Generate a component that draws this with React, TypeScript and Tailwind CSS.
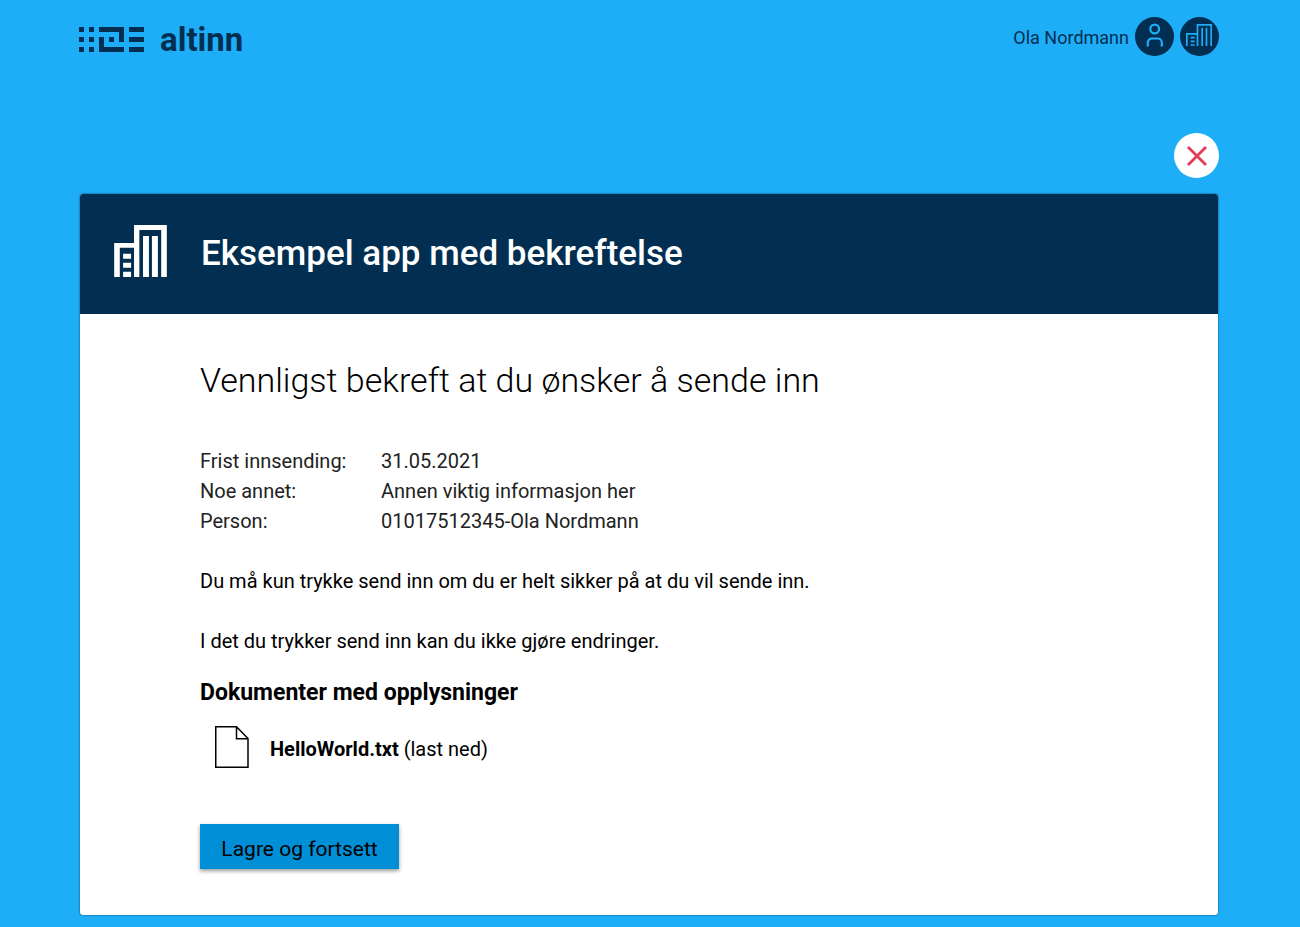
import React from "react";

type Detail = { label: string; value: string };

const details: Detail[] = [
  { label: "Frist innsending:", value: "31.05.2021" },
  { label: "Noe annet:", value: "Annen viktig informasjon her" },
  { label: "Person:", value: "01017512345-Ola Nordmann" },
];

function LogoMark() {
  return (
    <svg viewBox="0 0 65 25" className="h-[25px] w-[65px]" fill="currentColor" shapeRendering="crispEdges" aria-hidden="true">
      <path d="M0 0h5v5H0zM0 10h5v5H0zM0 20h5v5H0zM10 0h5v5h-5zM10 10h5v5h-5zM10 20h5v5h-5z" />
      <path d="M20 0h25v15h-5V5H20zM20 10h5v10h20v5H20zM30 10h5v5h-5z" />
      <path d="M50 0h15v5H50zM50 10h15v5H50zM50 20h15v5H50z" />
    </svg>
  );
}

function Building() {
  return (
    <svg viewBox="0 0 159 157" className="mb-1.5 h-[52px] w-[53px]" fill="currentColor" aria-hidden="true">
      <path d="M0 54h60V0h99v157h-17V15H76v142H60V69H17v88H0z" />
      <path d="M27 87h24v15H27zM27 114h24v15H27zM27 141h24v16H27zM87 33h18v124H87zM114 33h18v124h-18z" />
    </svg>
  );
}

function BuildingSmall() {
  return (
    <svg viewBox="0 0 78 66" className="h-[22px] w-[26px]" fill="none" stroke="currentColor" strokeWidth="5" aria-hidden="true">
      <path d="M2.5 66V29.5H32M34.5 66V2.5h41V66M48.5 66V11M61.5 66V11" />
      <path d="M14 41h12M14 52h12M14 63h12" />
    </svg>
  );
}

function Person() {
  return (
    <svg viewBox="0 0 39 39" className="size-[39px]" fill="none" stroke="currentColor" strokeWidth="2.2" aria-hidden="true">
      <circle cx="19.7" cy="12" r="4.4" />
      <path d="M12.8 29.5v-4a4 4 0 0 1 4-4h6a4 4 0 0 1 4 4v4" />
    </svg>
  );
}

export default function App() {
  return (
    <div className="min-h-screen bg-[#1eaef7] pr-[81px] pb-3 pl-[79px] font-['Roboto',sans-serif] text-black">
      <header className="flex h-[72px] items-center justify-between text-[#022f51]">
        <a href="#" className="flex items-center gap-4 pt-[7px]">
          <LogoMark />
          <span className="text-[33px] leading-10 font-bold">altinn</span>
        </a>
        <div className="flex items-center gap-1.5">
          <span className="pt-1 text-lg leading-6">Ola Nordmann</span>
          <button type="button" aria-label="Profil" className="size-[39px] rounded-full bg-[#022f51] text-[#1eaef7]">
            <Person />
          </button>
          <button type="button" aria-label="Virksomhet" className="flex size-[39px] items-center justify-center rounded-full bg-[#022f51] pr-px pb-0.5 text-[#1eaef7]">
            <BuildingSmall />
          </button>
        </div>
      </header>

      <div className="flex justify-end pt-[61px] pb-4">
        <button type="button" aria-label="Lukk" className="flex size-[45px] items-center justify-center rounded-full bg-white text-[#e23b53]">
          <svg viewBox="0 0 20 20" className="size-5" fill="none" stroke="currentColor" strokeWidth="2.8" aria-hidden="true">
            <path d="M1 1l18 18M19 1L1 19" />
          </svg>
        </button>
      </div>

      <main className="mx-px overflow-hidden rounded-[3px] bg-white shadow-[0_0_2px_#022f51]">
        <div className="flex h-[120px] items-center gap-[34px] bg-[#022f51] pl-[34px] text-white">
          <Building />
          <h1 className="text-[35px] leading-[44px] font-medium">Eksempel app med bekreftelse</h1>
        </div>

        <div className="px-[120px] pt-11 pb-[46px] text-xl leading-[30px]">
          <h2 className="text-[34px] leading-[44px] font-light">Vennligst bekreft at du ønsker å sende inn</h2>

          <table className="mt-11 text-left text-[#222]">
            <tbody>
              {details.map((d) => (
                <tr key={d.label}>
                  <th scope="row" className="w-[181px] p-0 font-normal">{d.label}</th>
                  <td className="p-0">{d.value}</td>
                </tr>
              ))}
            </tbody>
          </table>

          <p className="mt-[30px]">Du må kun trykke send inn om du er helt sikker på at du vil sende inn.</p>
          <p className="mt-[30px]">I det du trykker send inn kan du ikke gjøre endringer.</p>

          <h3 className="mt-[22px] text-[23px] font-bold">Dokumenter med opplysninger</h3>
          <a href="#" className="mt-[18px] flex items-center gap-[21px] pl-[15px]">
            <svg viewBox="0 0 34 42" className="h-[42px] w-[34px]" fill="none" stroke="currentColor" strokeWidth="1.5" aria-hidden="true">
              <path d="M.75.75H21.5L33 12.5v28.75H.75zM21.5.75v12H33" />
            </svg>
            <span className="pt-1">
              <span className="font-bold">HelloWorld.txt</span> (last ned)
            </span>
          </a>

          <button type="button" className="mt-14 h-[45px] min-w-[199px] bg-[#008fd6] px-5 pt-1 text-[21px] shadow-[0_2px_4px_rgba(0,0,0,0.4)]">
            Lagre og fortsett
          </button>
        </div>
      </main>
    </div>
  );
}
